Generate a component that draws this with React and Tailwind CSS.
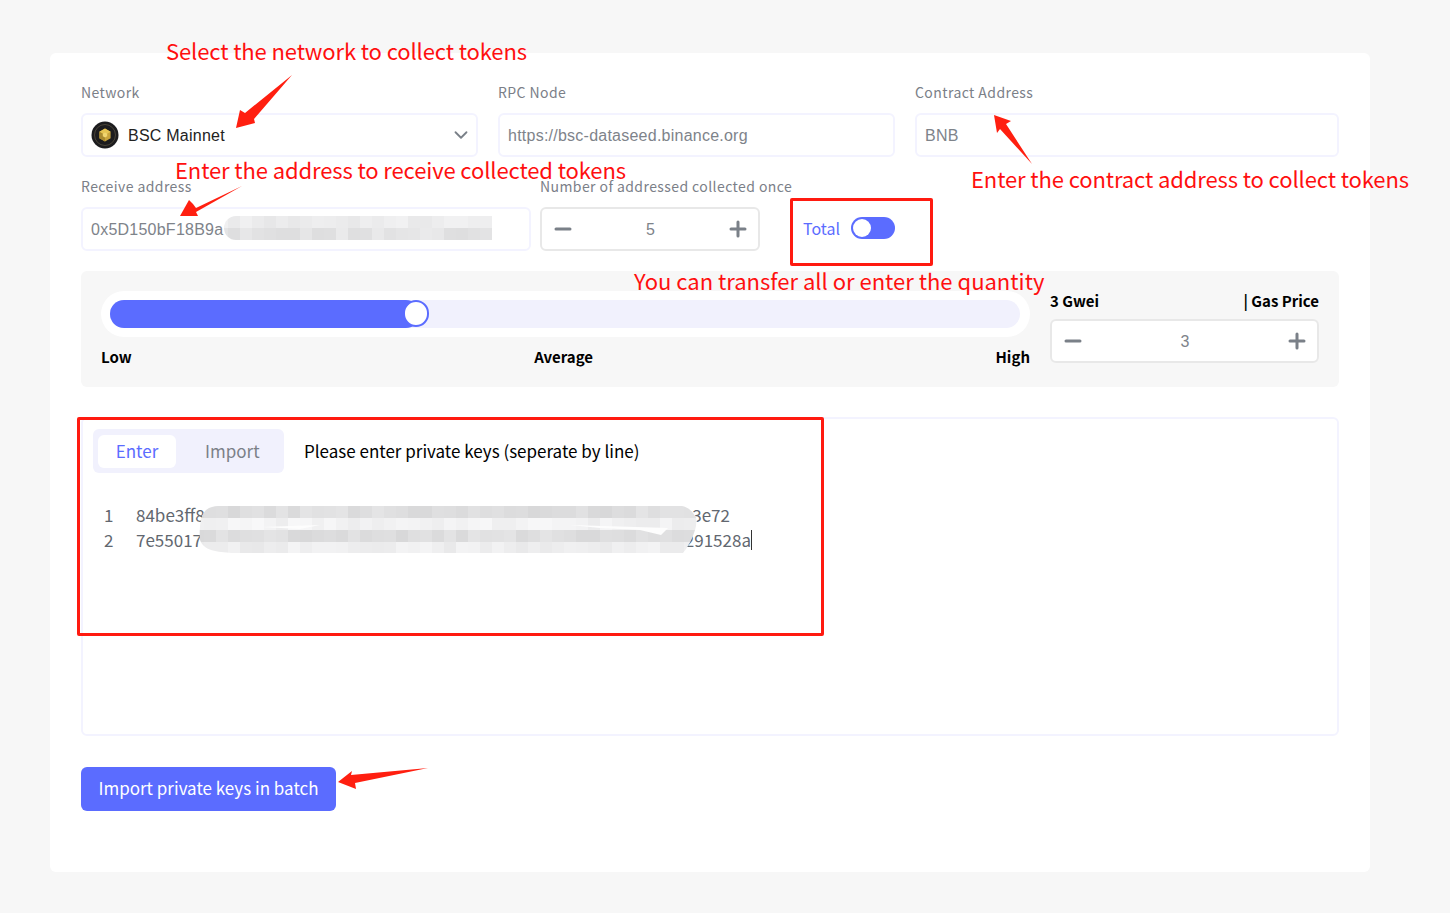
import { ChevronDown, Minus, Plus } from 'lucide-react';

const uiFont = "font-['Noto_Sans_CJK_SC','Noto_Sans',sans-serif]";
const inputFont = "font-['Liberation_Sans',Arial,sans-serif]";

// pixelated smudge used to hide the addresses and keys
const Mosaic = ({ x, y, cols, bases, seed = 7, clip, streak }) => {
  const cell = 12;
  const cells = [];
  let n = seed;
  bases.forEach((base, r) => {
    for (let c = 0; c < cols; c++) {
      n = (n * 73 + 41) % 101;
      const v = base + (n % 13);
      cells.push(<rect key={`${r}-${c}`} x={c * cell} y={r * cell} width={cell} height={cell} fill={`rgb(${v},${v},${v + 1})`} />);
    }
  });
  const w = cols * cell;
  const h = bases.length * cell;
  return (
    <svg className="absolute" style={{ left: x, top: y }} width={w} height={h} viewBox={`0 0 ${w} ${h}`}>
      <defs>
        <clipPath id={`m${seed}`}>
          <path d={clip} />
        </clipPath>
      </defs>
      <g clipPath={`url(#m${seed})`}>{cells}</g>
      {streak && <path d={streak} fill="#fdfdfd" />}
    </svg>
  );
};

const Label = ({ children }) => (
  <div className={`text-sm leading-[17px] tracking-[0.42px] whitespace-nowrap text-[#7b8088] mb-3 ${uiFont}`}>{children}</div>
);

const Box = ({ className = '', children }) => (
  <div className={`h-[44px] flex items-center border-2 border-[#f3f3ff] rounded-md bg-white px-2 text-base tracking-[0.24px] text-[#7e838a] ${inputFont} ${className}`}>
    {children}
  </div>
);

const Stepper = ({ value, className = '' }) => (
  <div className={`h-[44px] flex items-center justify-between border-2 border-[#e8e8e8] rounded-md bg-white pl-[9px] pr-[8px] text-base text-[#7e838a] ${inputFont} ${className}`}>
    <Minus size={24} strokeWidth={3} className="text-[#7a8088]" />
    <span className="pt-[2px]">{value}</span>
    <Plus size={24} strokeWidth={3} className="text-[#7a8088]" />
  </div>
);

const Note = ({ className, children }) => (
  <span className={`absolute whitespace-nowrap text-[22px] leading-[30px] text-[#ff0f0f] ${uiFont} ${className}`}>{children}</span>
);

const BscLogo = () => (
  <svg width="28" height="28" viewBox="0 0 28 28">
    <circle cx="14" cy="14" r="13.5" fill="#1c1c1e" />
    <circle cx="14" cy="14" r="10.5" fill="none" stroke="#4a4438" strokeWidth="1" />
    <path d="M14 7.5l5.6 3.2v6.5L14 20.5l-5.6-3.3v-6.5z" fill="#c9a43c" />
    <path d="M14 7.5l5.6 3.2L14 14l-5.6-3.3z" fill="#e6c452" />
    <path d="M14 14v6.5l-5.6-3.3v-6.5z" fill="#a98a30" />
    <path d="M14 11.5l2.2 1.3v2.5L14 16.6l-2.2-1.3v-2.5z" fill="#f1d670" />
  </svg>
);

export default function App() {
  return (
    <div className="relative w-[1450px] h-[913px] overflow-hidden bg-[#f7f7f7] pt-[53px] pl-[50px]">
      <div className="w-[1320px] h-[819px] bg-white rounded-md pt-[31px] px-[31px]">
        <div className="flex gap-5">
          <div className="w-[397px]">
            <Label>Network</Label>
            <Box className="justify-between pr-[4px]">
              <span className="flex items-center gap-[9px]">
                <BscLogo />
                <span className="pt-[2px] text-[#222]">BSC Mainnet</span>
              </span>
              <ChevronDown size={22} strokeWidth={2} className="text-[#7a8088]" />
            </Box>
          </div>
          <div className="w-[397px]">
            <Label>RPC Node</Label>
            <Box><span className="pt-[2px]">https://bsc-dataseed.binance.org</span></Box>
          </div>
          <div className="w-[424px]">
            <Label>Contract Address</Label>
            <Box><span className="pt-[2px]">BNB</span></Box>
          </div>
        </div>

        <div className="flex mt-[21px]">
          <div className="w-[450px]">
            <Label>Receive address</Label>
            <Box><span className="pt-[2px]">0x5D150bF18B9a</span></Box>
          </div>
          <div className="w-[220px] ml-[9px]">
            <Label>Number of addressed collected once</Label>
            <Stepper value="5" />
          </div>
          <div className={`ml-[43px] mt-[28px] h-[44px] flex items-center gap-[11px] text-base text-[#5b6cff] ${uiFont}`}>
            Total
            <span className="w-[44px] h-[22px] rounded-full bg-[#5b6cff] p-[2px] flex">
              <span className="w-[18px] h-[18px] rounded-full bg-white" />
            </span>
          </div>
        </div>

        <div className="flex mt-[20px] h-[116px] rounded-md bg-[#f7f7f7] pt-[20px] pl-[20px] pr-[20px]">
          <div className="w-[929px]">
            <div className="h-[46px] rounded-full bg-white p-[9px] pr-[10px]">
              <div className="relative h-[28px] rounded-full bg-[#f1f1fd]">
                <div className="h-full w-[310px] rounded-full bg-[#5b6cff]" />
                <div className="absolute left-[293px] top-0 w-[26px] h-[27px] rounded-full bg-white border-2 border-[#5b6cff]" />
              </div>
            </div>
            <div className={`flex justify-between mt-[10px] text-[15px] font-bold leading-[20px] text-black ${uiFont}`}>
              <span>Low</span>
              <span>Average</span>
              <span>High</span>
            </div>
          </div>
          <div className="w-[269px] ml-[20px]">
            <div className={`flex justify-between text-[15px] font-bold leading-[20px] text-black ${uiFont}`}>
              <span>3 Gwei</span>
              <span>| Gas Price</span>
            </div>
            <Stepper value="3" className="mt-[8px]" />
          </div>
        </div>

        <div className="mt-[30px] h-[319px] border-2 border-[#f3f3ff] rounded-md pt-[10px] pl-[10px]">
          <div className="flex items-center gap-5">
            <div className={`w-[191px] h-[44px] rounded-md bg-[#f1f1fd] flex items-center pl-[5px] text-[17px] ${uiFont}`}>
              <span className="w-[78px] h-[33px] rounded-md bg-white flex items-center justify-center text-[#5b6cff]">Enter</span>
              <span className="ml-[29px] text-[#7b8088]">Import</span>
            </div>
            <span className={`text-[17px] text-black ${uiFont}`}>Please enter private keys (seperate by line)</span>
          </div>
          <div className={`mt-[29px] text-[17px] leading-[25px] text-[#62676f] ${uiFont}`}>
            <div className="flex w-[637px]">
              <span className="w-[43px] pl-[11px]">1</span>
              <span>84be3ff81</span>
              <span className="ml-auto">3e72</span>
            </div>
            <div className="flex w-[659px]">
              <span className="w-[43px] pl-[11px]">2</span>
              <span>7e55017</span>
              <span className="ml-auto">291528a</span>
              <span className="w-px h-[20px] mt-[3px] bg-[#333]" />
            </div>
          </div>
        </div>

        <button className={`mt-[31px] w-[255px] h-[44px] rounded-md bg-[#5b6cff] pb-[3px] text-[17px] text-white ${uiFont}`}>
          Import private keys in batch
        </button>
      </div>

      <Mosaic x={216} y={216} cols={23} bases={[230, 222]} seed={11} clip="M20 0H276V24H20A12 12 0 0 1 20 0Z" />
      <Mosaic
        x={192}
        y={506}
        cols={43}
        bases={[216, 236, 216, 232]}
        seed={23}
        clip="M26 0H490C497 1 503 8 505 14C504 26 497 40 491 47H40C25 46 12 45 8 34C7 24 8 10 14 4C18 1 22 0 26 0Z"
        streak="M70 21L128 19L108 23ZM378 19L476 22L469 29L448 24L408 22Z"
      />

      <div className="absolute left-[77px] top-[417px] w-[747px] h-[219px] border-[3px] border-[#ff1a10] rounded-[2px]" />
      <div className="absolute left-[790px] top-[198px] w-[143px] h-[68px] border-[3px] border-[#ff1a10] rounded-[2px]" />

      <svg className="absolute left-0 top-0" width="1450" height="913" viewBox="0 0 1450 913">
        <g fill="#ff1f10">
          <polygon points="292,75 254,119 255,123 236,128 240,110 245,113" />
          <polygon points="242,186 196,208 193,204 189,200 180,216 198,216 196,212" />
          <polygon points="994,115 1011,121 1006,124 1032,164 1000,129 997,133" />
          <polygon points="338,782 352,771 351,775 428,768 355,783 356,789" />
        </g>
      </svg>

      <Note className="left-[166px] top-[35px] tracking-[-0.11px]">Select the network to collect tokens</Note>
      <Note className="left-[175px] top-[154px] tracking-[-0.11px]">Enter the address to receive collected tokens</Note>
      <Note className="left-[971px] top-[163px] tracking-[-0.11px]">Enter the contract address to collect tokens</Note>
      <Note className="left-[634px] top-[265px]">You can transfer all or enter the quantity</Note>
    </div>
  );
}
